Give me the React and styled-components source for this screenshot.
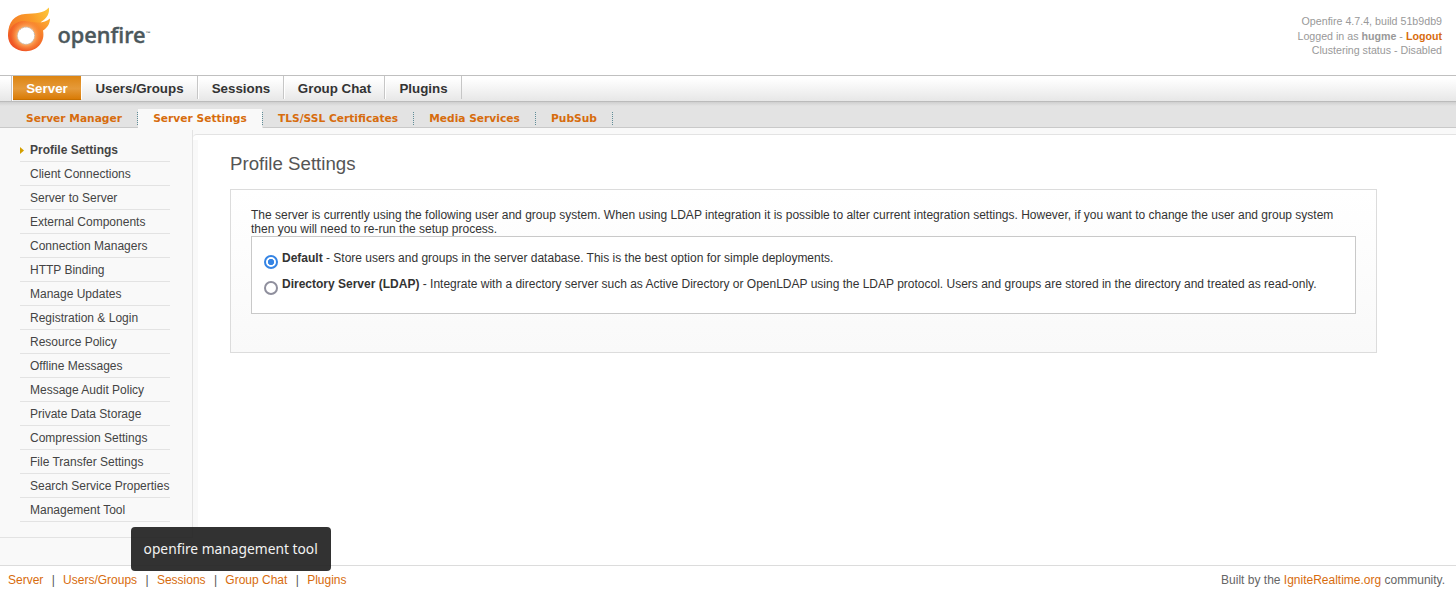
import React from "react";
import styled, { createGlobalStyle, css } from "styled-components";

const Global = createGlobalStyle`
  * { box-sizing: border-box; }
  body {
    margin: 0;
    background: #fff;
    color: #333;
    font: 12px/14px "Liberation Sans", Arial, sans-serif;
    overflow: hidden;
  }
  a { color: #d76c0d; text-decoration: none; }
`;

const Page = styled.div`
  height: 598px;
  display: flex;
  flex-direction: column;
  position: relative;
`;

const Header = styled.header`
  height: 75px;
  flex: none;
  display: flex;
  justify-content: space-between;
  padding: 7px 14px 0 7px;
`;

const Logo = styled.svg`
  width: 150px;
  height: 50px;
  display: block;
`;

const Status = styled.div`
  padding-top: 7px;
  text-align: right;
  font-size: 10.67px;
  line-height: 14.5px;
  color: #999;
  a { font-weight: bold; }
`;

const MainNav = styled.nav`
  height: 27px;
  flex: none;
  display: flex;
  padding-left: 11px;
  border-top: 1px solid #c0c0c0;
  border-bottom: 1px solid #bbb;
  background: linear-gradient(#fff 10%, #e7e7e7);
`;

const NavTab = styled.a`
  width: ${(p) => p.$width}px;
  height: 23px;
  display: flex;
  justify-content: center;
  align-items: center;
  padding-top: 2px;
  font-size: 13.33px;
  font-weight: bold;
  color: #333;
  border-left: 1px solid #fff;
  border-right: 1px solid #c6c6c6;
  ${(p) =>
    p.$active &&
    css`
      height: 24px;
      padding-top: 2px;
      color: #fff;
      border: 0;
      border-bottom: 1px solid #c87000;
      background: linear-gradient(#dd8512, #e59a3a 55%, #d97b06);
    `}
`;

const NavEdge = styled.span`
  width: 2px;
  height: 25px;
  border-left: 1px solid #c6c6c6;
  border-right: 1px solid #fff;
`;

const SubNav = styled.nav`
  height: 26px;
  flex: none;
  display: flex;
  align-items: flex-end;
  padding-left: 11px;
  border-bottom: 1px solid #c9c9c9;
  background: linear-gradient(#cfcfcf, #e3e3e3 4px);
`;

const SubTab = styled.a`
  width: ${(p) => p.$width}px;
  height: 18px;
  display: flex;
  position: relative;
  font: bold 10.67px/20px "DejaVu Sans", Verdana, sans-serif;
  justify-content: center;
  white-space: nowrap;
  padding-right: 1px;
  &::after {
    content: "";
    position: absolute;
    right: 0;
    top: 3px;
    height: 13px;
    border-right: 1px dotted #5f8c97;
  }
  ${(p) =>
    p.$active &&
    css`
      height: 19px;
      margin-bottom: -1px;
      background: linear-gradient(90deg, #f9f9f9 124px, #e3e3e3 124px);
    `}
`;

const Body = styled.div`
  height: 437px;
  flex: none;
  display: flex;
  background: #f9f9f9;
`;

const Sidebar = styled.aside`
  width: 193px;
  height: 408px;
  flex: none;
  margin-top: 2px;
  padding: 8px 22px 0 20px;
  border-right: 1px solid #e3e3e3;
  border-bottom: 1px solid #e3e3e3;
`;

const SideItem = styled.a`
  height: 24px;
  display: flex;
  align-items: center;
  position: relative;
  padding-left: 10px;
  border-bottom: 1px solid #e3e3e3;
  white-space: nowrap;
  color: #444;
  font-weight: ${(p) => (p.$active ? "bold" : "normal")};
`;

const Arrow = styled.svg`
  position: absolute;
  left: 0;
  top: 9px;
  width: 4px;
  height: 7px;
`;

const Main = styled.main`
  flex: 1;
  margin: 6px 0 0 0;
  padding: 18px 79px 0 37px;
  border-top: 1px solid #e3e3e3;
  border-top-left-radius: 4px;
  background: linear-gradient(90deg, #f9f9f9 5px, #fff 5px) 0 5px no-repeat, #fff;
`;

const Title = styled.h1`
  margin: 0 0 15px;
  font-size: 18.67px;
  line-height: 21px;
  font-weight: normal;
  color: #555;
`;

const Panel = styled.section`
  height: 164px;
  padding: 18px 20px;
  border: 1px solid #dcdcdc;
  background: linear-gradient(#fff, #f9f9f9);
`;

const Intro = styled.p`
  margin: 0;
`;

const Options = styled.div`
  height: 78px;
  padding: 12px 11px;
  border: 1px solid #c9c9c9;
  background: #fff;
`;

const Option = styled.label`
  height: 26px;
  display: flex;
  gap: 3px;
  padding-top: 2px;
  white-space: nowrap;
`;

const Radio = styled.span`
  width: 14px;
  height: 14px;
  flex: none;
  margin: 4px 1px 0;
  border-radius: 50%;
  border: 2px solid ${(p) => (p.$checked ? "#3584e4" : "#8f8f9d")};
  background: ${(p) =>
    p.$checked ? "radial-gradient(circle, #3584e4 2.8px, #fff 3.5px)" : "#fff"};
`;

const Footer = styled.footer`
  height: 33px;
  flex: none;
  display: flex;
  justify-content: space-between;
  padding: 7px 11px 0 8px;
  border-top: 1px solid #dcdcdc;
  color: #666;
`;

const FooterLinks = styled.div`
  display: flex;
`;

const Separator = styled.span`
  width: 19.75px;
  text-align: center;
  color: #555;
`;

const Tooltip = styled.div`
  position: absolute;
  left: 131px;
  top: 527px;
  width: 200px;
  height: 44px;
  border-radius: 4px;
  background: rgba(34, 34, 34, 0.93);
  color: #f2f2f2;
  font: 14.67px/43px "Noto Sans", "Open Sans", sans-serif;
  display: flex;
  justify-content: center;
  white-space: nowrap;
`;

const TooltipText = styled.span`
  transform: scaleX(0.94);
`;

const tabs = [
  ["Users/Groups", 117],
  ["Sessions", 86],
  ["Group Chat", 101],
  ["Plugins", 77],
];

const subTabs = [
  ["Server Manager", 127],
  ["Server Settings", 125],
  ["TLS/SSL Certificates", 151],
  ["Media Services", 122],
  ["PubSub", 77],
];

const sideItems = [
  "Profile Settings",
  "Client Connections",
  "Server to Server",
  "External Components",
  "Connection Managers",
  "HTTP Binding",
  "Manage Updates",
  "Registration & Login",
  "Resource Policy",
  "Offline Messages",
  "Message Audit Policy",
  "Private Data Storage",
  "Compression Settings",
  "File Transfer Settings",
  "Search Service Properties",
  "Management Tool",
];

const footerLinks = ["Server", "Users/Groups", "Sessions", "Group Chat", "Plugins"];

function OpenfireLogo() {
  return (
    <Logo viewBox="7 7 150 50">
      <defs>
        <linearGradient id="flame" x1="10" y1="30" x2="49" y2="10" gradientUnits="userSpaceOnUse">
          <stop offset="0" stopColor="#f47a2a" />
          <stop offset=".55" stopColor="#fa9a28" />
          <stop offset="1" stopColor="#fdc63a" />
        </linearGradient>
        <linearGradient id="ring" x1="44" y1="20" x2="18" y2="50" gradientUnits="userSpaceOnUse">
          <stop offset="0" stopColor="#fca62f" />
          <stop offset=".4" stopColor="#f5742a" />
          <stop offset="1" stopColor="#ef5426" />
        </linearGradient>
        <radialGradient id="glow" cx="26" cy="35.7" r="15.5" gradientUnits="userSpaceOnUse">
          <stop offset=".55" stopColor="#fcae66" />
          <stop offset="1" stopColor="#fb8b35" stopOpacity="0" />
        </radialGradient>
      </defs>
      <path
        d="M8 35C8 22 15 14.500 25 14C35 13.500 44 13.500 48.800 7.500C50 13 47 18.500 41 22L38 30L10 40Z"
        fill="url(#flame)"
      />
      <path
        d="M8 35.500C9 26 17 20.500 25 21C34 22 44 24.500 50 18.500C50 25 46 28.500 43 30.500C45.500 42 37 51.200 26 51.200C15 51.200 8 44.500 8 35.500Z"
        fill="url(#ring)"
      />
      <circle cx="26" cy="35.700" r="15" fill="url(#glow)" />
      <circle cx="26" cy="35.700" r="8.600" fill="#fff" stroke="#c2b9b4" strokeWidth="1" strokeDasharray="2 1" />
      <text
        x="57.500"
        y="43"
        textLength="88"
        lengthAdjust="spacingAndGlyphs"
        fontFamily="'Noto Sans', sans-serif"
        fontSize="22"
        fontWeight="500"
        fill="#4b575b"
        stroke="#4b575b"
        strokeWidth=".45"
      >
        openfire
      </text>
      <text x="145.500" y="34.500" fontFamily="'Liberation Sans', sans-serif" fontSize="5" fontWeight="bold" fill="#4b575b">
        ™
      </text>
    </Logo>
  );
}

export default function App() {
  return (
    <Page>
      <Global />
      <Header>
        <OpenfireLogo />
        <Status>
          Openfire 4.7.4, build 51b9db9
          <br />
          Logged in as <b>hugme</b> - <a href="#logout">Logout</a>
          <br />
          Clustering status - Disabled
        </Status>
      </Header>
      <MainNav>
        <NavEdge />
        <NavTab $active $width={68}>Server</NavTab>
        {tabs.map(([label, width]) => (
          <NavTab key={label} $width={width}>{label}</NavTab>
        ))}
      </MainNav>
      <SubNav>
        {subTabs.map(([label, width], i) => (
          <SubTab key={label} $width={width} $active={i === 1}>{label}</SubTab>
        ))}
      </SubNav>
      <Body>
        <Sidebar>
          {sideItems.map((label, i) => (
            <SideItem key={label} $active={i === 0}>
              {i === 0 && (
                <Arrow viewBox="0 0 4 7">
                  <path d="M0 0L4 3.500L0 7Z" fill="#d4a000" />
                </Arrow>
              )}
              {label}
            </SideItem>
          ))}
        </Sidebar>
        <Main>
          <Title>Profile Settings</Title>
          <Panel>
            <Intro>
              The server is currently using the following user and group system. When using LDAP integration it is
              possible to alter current integration settings. However, if you want to change the user and group system
              then you will need to re-run the setup process.
            </Intro>
            <Options>
              <Option>
                <Radio $checked />
                <span><b>Default</b> - Store users and groups in the server database. This is the best option for simple deployments.</span>
              </Option>
              <Option>
                <Radio />
                <span>
                  <b>Directory Server (LDAP)</b> - Integrate with a directory server such as Active Directory or
                  OpenLDAP using the LDAP protocol. Users and groups are stored in the directory and treated as read-only.
                </span>
              </Option>
            </Options>
          </Panel>
        </Main>
      </Body>
      <Footer>
        <FooterLinks>
          {footerLinks.map((label, i) => (
            <React.Fragment key={label}>
              {i > 0 && <Separator>|</Separator>}
              <a href="#nav">{label}</a>
            </React.Fragment>
          ))}
        </FooterLinks>
        <span>Built by the <a href="#ignite">IgniteRealtime.org</a> community.</span>
      </Footer>
      <Tooltip><TooltipText>openfire management tool</TooltipText></Tooltip>
    </Page>
  );
}
